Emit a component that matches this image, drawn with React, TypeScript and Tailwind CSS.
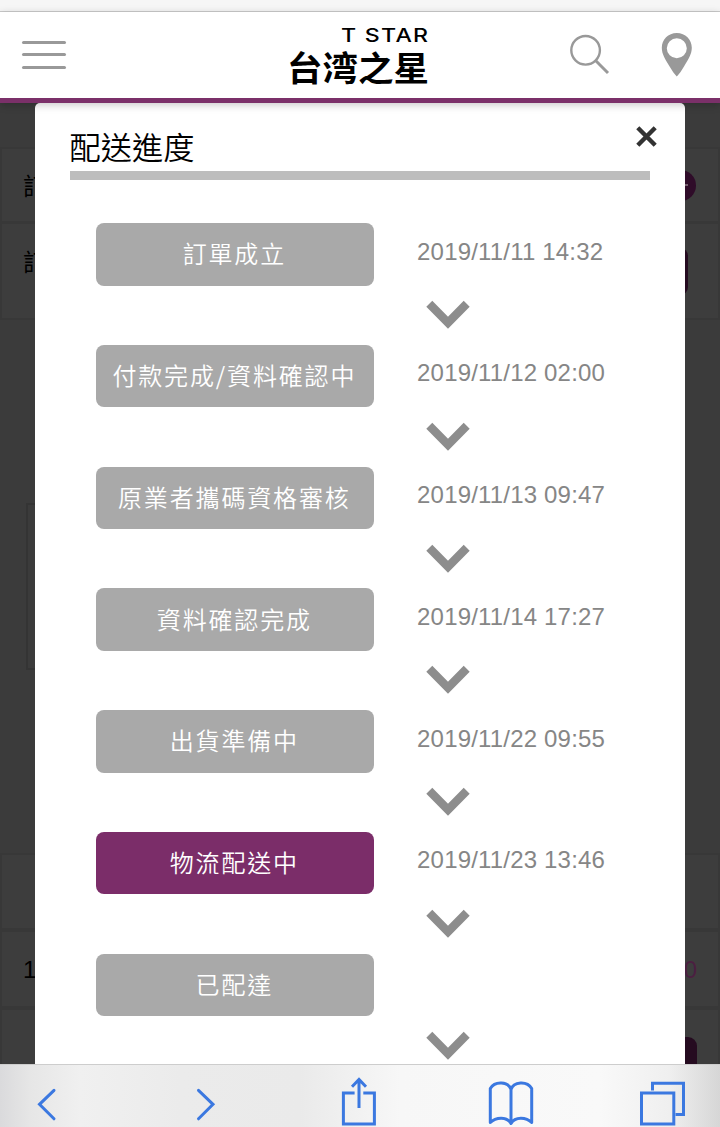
import type { ReactNode } from "react";
import clsx from "clsx";

interface Step {
  label: string;
  time?: string;
  active?: boolean;
}

const steps: Step[] = [
  { label: "訂單成立", time: "2019/11/11 14:32" },
  { label: "付款完成/資料確認中", time: "2019/11/12 02:00" },
  { label: "原業者攜碼資格審核", time: "2019/11/13 09:47" },
  { label: "資料確認完成", time: "2019/11/14 17:27" },
  { label: "出貨準備中", time: "2019/11/22 09:55" },
  { label: "物流配送中", time: "2019/11/23 13:46", active: true },
  { label: "已配達" },
];

function Header() {
  return (
    <header className="relative z-20 flex h-[91px] shrink-0 items-start border-b-[5px] border-[#7b3069] bg-white shadow-[0_2px_8px_rgba(0,0,0,0.22)]">
      <button type="button" aria-label="menu" className="mt-[29px] ml-[22px] flex w-[44px] flex-col gap-[9.3px]">
        <span className="h-[3px] rounded-full bg-[#999]" />
        <span className="h-[3px] rounded-full bg-[#999]" />
        <span className="h-[3px] rounded-full bg-[#999]" />
      </button>

      <div className="ml-[221px] flex w-[142px] flex-col items-end text-black">
        <span className="mt-[15px] origin-right scale-x-[1.22] font-['Inter'] text-[19px] leading-[18px] font-medium tracking-[1px] whitespace-nowrap">
          T STAR
        </span>
        <span className="mt-[4px] origin-center scale-y-[0.95] font-['Noto_Sans_CJK_TC',sans-serif] text-[35.5px] leading-[36px] font-bold whitespace-nowrap">
          台湾之星
        </span>
      </div>

      <svg className="mt-[20px] ml-[138px] h-[44px] w-[44px]" viewBox="0 0 44 44" fill="none" stroke="#999" aria-label="search">
        <circle cx="18.600" cy="18.300" r="14.300" strokeWidth="2.400" />
        <path d="M28.800 28.800 41 41" strokeWidth="3" />
      </svg>
      <svg className="mt-[20px] ml-[48px] h-[46px] w-[34px]" viewBox="0 0 34 46" fill="#999" aria-label="stores">
        <path
          fillRule="evenodd"
          d="M17.800 1C9.200 1 2.800 7.500 2.800 15.800c0 6.500 3.500 11.500 7.500 18.200 2.800 4.500 5.200 8.500 7.500 10.400 2.300-1.900 4.700-5.900 7.500-10.400 4-6.700 7.500-11.700 7.500-18.200C32.800 7.500 26.400 1 17.800 1Zm0 5.200a10 10 0 1 1 0 20 10 10 0 0 1 0-20Z"
        />
      </svg>
    </header>
  );
}

function OrderPage() {
  return (
    <div className="h-full bg-[#3b3b3b] text-[24px] text-black">
      <div className="h-[44px]" />
      <div className="flex h-[77px] items-center justify-between border-2 border-b-[3px] border-[#383838] bg-[#3d3d3d] pr-[22px] pl-[21px]">
        <span className="font-['Noto_Sans_CJK_TC',sans-serif]">訂</span>
        <span className="flex h-[31px] w-[31px] items-center justify-center rounded-full bg-[#2f0c29]">
          <span className="h-[2px] w-[14px] bg-[#77606f]" />
        </span>
      </div>
      <div className="flex h-[96px] items-start justify-between border-2 border-t-0 border-[#383838] bg-[#3d3d3d] pr-[30px] pl-[21px]">
        <span className="mt-[19px] font-['Noto_Sans_CJK_TC',sans-serif]">訂</span>
        <span className="mt-[24px] h-[47px] w-[120px] rounded-[8px] bg-[#250b20]" />
      </div>
      <div className="mt-[183px] mr-[60px] ml-[26px] h-[167px] border-2 border-[#343434]" />
      <div className="mt-[183px] h-[79px] border-2 border-b-[4px] border-[#383838] bg-[#3d3d3d]" />
      <div className="flex h-[78px] items-center justify-between border-2 border-t-0 border-b-[4px] border-[#383838] bg-[#3d3d3d] pt-[2px] pr-[21px] pl-[21px] font-['Liberation_Sans',sans-serif]">
        <span>1</span>
        <span className="text-[#4b1f41]">0</span>
      </div>
      <div className="flex h-[54px] justify-end border-x-2 border-[#383838] bg-[#3d3d3d] pr-[21px]">
        <span className="mt-[27px] w-[140px] rounded-t-[9px] bg-[#250b20]" />
      </div>
    </div>
  );
}

function StepRow({ step }: { step: Step }) {
  return (
    <li className="flex h-[121.75px] gap-[43px]">
      <div
        className={clsx(
          "flex h-[62.5px] w-[278.5px] items-center justify-center rounded-[8px] pr-px pb-[2px] font-['Noto_Sans_CJK_TC',sans-serif] text-[24px] font-[350] tracking-[1.85px] whitespace-nowrap text-white",
          step.active ? "bg-[#7b2d69]" : "bg-[#a9a9a9]",
        )}
      >
        {step.label}
      </div>
      <div className="flex flex-col font-['Liberation_Sans',sans-serif] text-[24px] text-[#868686]">
        <span className="mt-[12.5px] h-[32px] leading-[32px] tracking-[0.18px] whitespace-nowrap">{step.time}</span>
        <svg className="mt-[32.5px] ml-[9px] h-[30px] w-[44px]" viewBox="0 0 44 30" fill="none" aria-hidden="true">
          <path d="M3.300 3.800 22 22.700 40.700 3.800" stroke="#8d8d8d" strokeWidth="8.400" />
        </svg>
      </div>
    </li>
  );
}

function ProgressDialog() {
  return (
    <section className="absolute inset-y-0 left-[35px] w-[650px] overflow-hidden rounded-t-[5px] bg-white pl-[34.6px]">
      <div className="flex h-[68px] items-start justify-between pr-[28px]">
        <h2 className="mt-[23px] font-['Noto_Sans_CJK_TC',sans-serif] text-[31.2px] leading-[40px] font-[350] text-black">配送進度</h2>
        <button type="button" aria-label="close" className="mt-[23px]">
          <svg className="h-[21px] w-[21px]" viewBox="0 0 21 21" stroke="#333" strokeWidth="4.400">
            <path d="m1.800 1.800 17.400 17.400M19.200 1.800 1.800 19.200" />
          </svg>
        </button>
      </div>
      <div className="h-[9px] w-[580.5px] bg-[#bdbdbd]" />
      <ol className="mt-[43px] pl-[26px]">
        {steps.map((step) => (
          <StepRow key={step.label} step={step} />
        ))}
      </ol>
    </section>
  );
}

function ToolbarIcon({ label, children }: { label: string; children: ReactNode }) {
  return (
    <button type="button" aria-label={label}>
      <svg className="h-[50px] w-[48px]" viewBox="0 0 48 50" fill="none" stroke="#3b78e0" strokeWidth="3">
        {children}
      </svg>
    </button>
  );
}

function BrowserToolbar() {
  return (
    <nav className="z-20 flex h-[63px] shrink-0 items-end justify-between border-t border-[#cdcdcd] bg-[linear-gradient(90deg,#dadadc_0px,#e6e6e6_30px,#f0f0f0_80px,#ebebeb_180px,#eaeaea_300px,#f7f7f7_400px,#f9f9f9_600px,#efefef_670px,#d6d6d6_720px)] pr-[34px] pl-[30px]">
      <ToolbarIcon label="back">
        <path d="M24 13.300 9.500 27.300l14.500 14.500" strokeLinecap="round" />
      </ToolbarIcon>
      <ToolbarIcon label="forward">
        <path d="m16.500 13.300 14.500 14-14.500 14.500" strokeLinecap="round" />
      </ToolbarIcon>
      <ToolbarIcon label="share">
        <path d="M20.600 16H9.400v31h31V16H29.300" />
        <path d="M25 31V3M18 9.700l7-7.200 7 7.200" />
      </ToolbarIcon>
      <ToolbarIcon label="bookmarks">
        <path
          d="M25 12.500C22.500 4.500 9 3.500 4.300 11.500V45.500C9.500 40 21 39 25 46.500c4-7.500 15.500-6.500 20.700-1V11.500C41 3.500 27.500 4.500 25 12.500v34"
          strokeLinejoin="round"
        />
      </ToolbarIcon>
      <ToolbarIcon label="tabs">
        <path d="M3.500 16h32.300v31H3.500z" />
        <path d="M14.500 13.500V6.200h31v31.300h-8" />
      </ToolbarIcon>
    </nav>
  );
}

export default function App() {
  return (
    <div className="flex h-[1127px] w-[720px] flex-col overflow-hidden bg-white">
      <div className="h-[12px] shrink-0 border-b border-[#cbcbcb] bg-[#f6f6f6]" />
      <Header />
      <main className="relative h-[961px] shrink-0 overflow-hidden">
        <OrderPage />
        <ProgressDialog />
      </main>
      <BrowserToolbar />
    </div>
  );
}
